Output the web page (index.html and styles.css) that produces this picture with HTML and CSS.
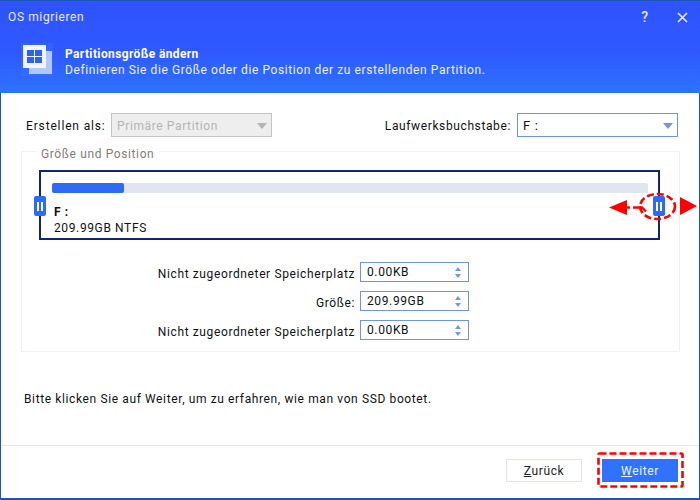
FILE: index.html
```html
<!DOCTYPE html>
<html lang="de">
<head>
<meta charset="utf-8">
<title>OS migrieren</title>
<link rel="stylesheet" href="styles.css">
</head>
<body>
<div class="window">
  <header class="header">
    <div class="titlebar">
      <span class="title">OS migrieren</span>
      <span class="win-btns">
        <span class="help">?</span>
        <svg class="close" width="11" height="11" viewBox="0 0 11 11"><path d="M1 1l9 9M10 1l-9 9" stroke="#fff" stroke-width="1.6" fill="none" opacity=".9"/></svg>
      </span>
    </div>
    <div class="headline">
      <svg class="logo" width="32" height="33" viewBox="0 0 32 33">
        <rect x="0" y="0" width="32" height="33" fill="#3a78ff" opacity=".35"/>
        <path d="M8 8h23v23H8z" fill="#b0c8fb"/>
        <rect x="2" y="2" width="23" height="23" fill="#f1f5fe"/>
        <rect x="6" y="7" width="7" height="6" fill="#2c62ee"/>
        <rect x="14" y="7" width="7" height="6" fill="#2c62ee"/>
        <rect x="6" y="14" width="7" height="6" fill="#2c62ee"/>
        <rect x="14" y="14" width="7" height="6" fill="#2c62ee"/>
      </svg>
      <div class="headtext">
        <div class="h-strong">Partitionsgröße ändern</div>
        <div class="h-sub">Definieren Sie die Größe oder die Position der zu erstellenden Partition.</div>
      </div>
    </div>
  </header>

  <main class="content">
    <div class="top-row">
      <div class="field">
        <span class="lbl lbl-first">Erstellen als:</span>
        <div class="select disabled">
          <span>Primäre Partition</span><i class="caret"></i>
        </div>
      </div>
      <div class="field">
        <span class="lbl">Laufwerksbuchstabe:</span>
        <div class="select active">
          <span>F :</span><i class="caret"></i>
        </div>
      </div>
    </div>

    <section class="group">
      <div class="legend">Größe und Position</div>
      <div class="partition">
        <div class="track"><div class="fill"></div></div>
        <div class="p-name">F :</div>
        <div class="p-info">209.99GB NTFS</div>
        <span class="handle handle-l"><b></b><b></b></span>
        <span class="handle handle-r"><b></b><b></b></span>
        <svg class="annot" width="92" height="34" viewBox="0 0 92 34">
          <path d="M1 17.5L19 10v15z" fill="#f00"/>
          <path d="M19 17.5h3" stroke="#f00" stroke-width="2.4"/>
          <path d="M25 17.5h9l4 4" stroke="#f00" stroke-width="2.4" fill="none"/>
          <ellipse cx="49.5" cy="16.5" rx="17.5" ry="12.5" fill="none" stroke="#f00" stroke-width="2.6" stroke-dasharray="7 3"/>
          <path d="M89 16L72 7v18z" fill="#f00"/>
        </svg>
      </div>
      <div class="sizes">
        <div class="size-row">
          <span class="size-lbl">Nicht zugeordneter Speicherplatz</span>
          <div class="spin"><span>0.00KB</span><span class="arrows"><i class="up"></i><i class="down"></i></span></div>
        </div>
        <div class="size-row">
          <span class="size-lbl">Größe:</span>
          <div class="spin"><span>209.99GB</span><span class="arrows"><i class="up"></i><i class="down"></i></span></div>
        </div>
        <div class="size-row">
          <span class="size-lbl">Nicht zugeordneter Speicherplatz</span>
          <div class="spin"><span>0.00KB</span><span class="arrows"><i class="up"></i><i class="down"></i></span></div>
        </div>
      </div>
    </section>

    <p class="hint">Bitte klicken Sie auf Weiter, um zu erfahren, wie man von SSD bootet.</p>
  </main>

  <footer class="footer">
    <button class="btn back"><u>Z</u>urück</button>
    <span class="dash">
      <button class="btn next"><u>W</u>eiter</button>
      <svg class="dash-line" width="87" height="36" viewBox="0 0 87 36"><rect x="1.5" y="1.5" width="84" height="33" rx="1" fill="none" stroke="#f00" stroke-width="2.6" stroke-dasharray="7 3"/></svg>
    </span>
  </footer>
</div>
</body>
</html>
```

FILE: styles.css
```css
* { box-sizing: border-box; }
html, body { margin: 0; padding: 0; }
body {
  width: 700px;
  height: 500px;
  overflow: hidden;
  font-family: Roboto, "Liberation Sans", sans-serif;
  font-size: 12px;
  letter-spacing: .62px;
  color: #111;
  background: #fff;
}
.window {
  width: 700px;
  height: 500px;
  display: flex;
  flex-direction: column;
  border-left: 1px solid #1b57b5;
  border-right: 1px solid #1b57b5;
  border-bottom: 2px solid #1b57b5;
  background: #fff;
}
.header {
  height: 93px;
  flex: none;
  margin: 0 -1px;
  padding: 0 0 0 8px;
  color: #fff;
  background: linear-gradient(#2e53ff 0%, #2f58ff 55%, #2d73ff 100%);
  border-top: 1px solid #1b57b5;
}
.titlebar {
  display: flex;
  justify-content: space-between;
  align-items: center;
  height: 32px;
  color: #e8edff;
}
.win-btns { display: flex; align-items: center; gap: 29px; padding-right: 12px; }
.help { font-size: 14px; font-weight: 500; letter-spacing: 0; }
.close { display: block; }
.headline { display: flex; align-items: flex-start; margin: 10px 0 0 13px; gap: 12px; }
.logo { display: block; flex: none; }
.headtext { line-height: 16px; padding-top: 3px; }
.h-strong { font-weight: 700; letter-spacing: .38px; }
.h-sub { color: #eef2ff; letter-spacing: .6px; }

.content { flex: 1; padding: 20px 21px 0 20px; }
.top-row { display: flex; justify-content: space-between; padding: 0 0 0 5px; }
.field { display: flex; align-items: center; gap: 6px; }
.lbl { line-height: 22px; padding-top: 2px; }
.lbl-first { width: 79px; letter-spacing: .85px; white-space: nowrap; }
.select {
  display: flex;
  align-items: center;
  justify-content: space-between;
  height: 24px;
  width: 161px;
  padding: 1px 4px 0 5px;
  border: 1px solid #6d96d8;
}
.select.disabled { background: #eeeeee; border-color: #c4c4c4; color: #b4b4b4; }
.select.active { font-size: 13px; }
.caret {
  width: 0;
  height: 0;
  border-left: 5px solid transparent;
  border-right: 5px solid transparent;
  border-top: 6px solid #7099d8;
}
.select.disabled .caret { border-top-color: #b4b4b4; }

.group {
  margin: 14px 0 0 0;
  padding: 0 19px 0 17px;
  width: 659px;
  height: 201px;
  border: 1px solid #eff1f7;
}
.legend {
  width: fit-content;
  margin: -5px 0 9px -3px;
  padding: 0 5px;
  background: #fff;
  color: #857c78;
  line-height: 14px;
}
.partition {
  position: relative;
  width: 621px;
  height: 70px;
  border: 2px solid #12256d;
  padding: 11px 10px 0 11px;
}
.track { height: 10px; background: #dfe6f1; border-radius: 2px; }
.fill { width: 72px; height: 10px; background: #2d6bf5; border-radius: 2px; }
.p-name { margin: 11px 0 0 2px; font-weight: 700; line-height: 16px; }
.p-info { margin-left: 2px; line-height: 16px; }
.handle {
  position: absolute;
  top: 24px;
  width: 12px;
  height: 20px;
  background: #2d6bf5;
  border-radius: 2px;
  display: flex;
  align-items: center;
  justify-content: center;
  gap: 2px;
}
.handle b { width: 2px; height: 9px; background: #fff; }
.handle-l { left: -7px; }
.handle-r { left: 612px; }
.annot { position: absolute; left: 567px; top: 18px; }

.sizes { margin-top: 22px; display: flex; flex-direction: column; gap: 9px; }
.size-row { display: flex; align-items: center; }
.size-lbl { width: 316px; text-align: right; white-space: nowrap; padding-top: 3px; }
.spin {
  margin-left: 5px;
  width: 109px;
  height: 20px;
  border: 1px solid #6d96d8;
  display: flex;
  align-items: center;
  justify-content: space-between;
  padding: 0 7px 0 6px;
}
.arrows { display: flex; flex-direction: column; gap: 3px; }
.arrows i { width: 0; height: 0; border-left: 3.5px solid transparent; border-right: 3.5px solid transparent; }
.arrows .up { border-bottom: 4px solid #7099d8; }
.arrows .down { border-top: 4px solid #7099d8; }

.hint { margin: 39px 0 0 3px; line-height: 16px; }

.footer {
  flex: none;
  height: 53px;
  border-top: 1px solid #e2e6f0;
  display: flex;
  justify-content: flex-end;
  align-items: flex-start;
  padding: 13px 21px 0 0;
  gap: 20px;
}
.btn {
  display: block;
  width: 76px;
  height: 23px;
  font: inherit;
  letter-spacing: inherit;
  padding: 1px 0 0;
}
.back { background: #fff; border: 1px solid #dfe4ef; color: #222; }
.next { background: #2f72ff; border: 0; color: #eef3ff; }
.dash { display: block; position: relative; }
.dash-line { position: absolute; left: -5px; top: -7px; }
```
